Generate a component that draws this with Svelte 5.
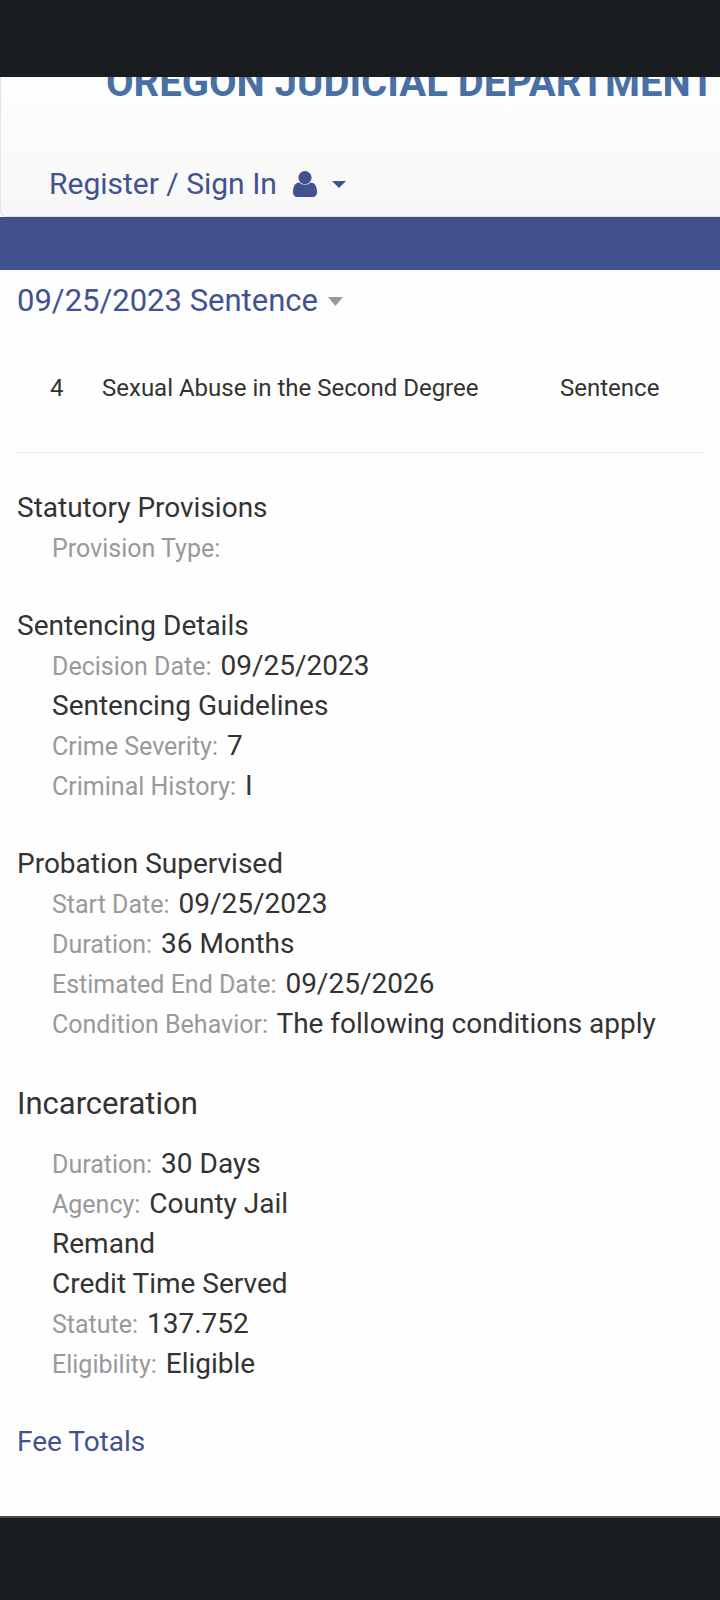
<script>
  const sections = [
    { title: 'Statutory Provisions', rows: [{ label: 'Provision Type:' }] },
    {
      title: 'Sentencing Details',
      rows: [
        { label: 'Decision Date:', value: '09/25/2023' },
        { value: 'Sentencing Guidelines' },
        { label: 'Crime Severity:', value: '7' },
        { label: 'Criminal History:', value: 'I' }
      ]
    },
    {
      title: 'Probation Supervised',
      rows: [
        { label: 'Start Date:', value: '09/25/2023' },
        { label: 'Duration:', value: '36 Months' },
        { label: 'Estimated End Date:', value: '09/25/2026' },
        { label: 'Condition Behavior:', value: 'The following conditions apply' }
      ]
    },
    {
      title: 'Incarceration',
      large: true,
      rows: [
        { label: 'Duration:', value: '30 Days' },
        { label: 'Agency:', value: 'County Jail' },
        { value: 'Remand' },
        { value: 'Credit Time Served' },
        { label: 'Statute:', value: '137.752' },
        { label: 'Eligibility:', value: 'Eligible' }
      ]
    }
  ];
</script>

<div class="page">
  <div class="top-bar"></div>
  <header>
    <a class="brand" href="#home">OREGON JUDICIAL DEPARTMENT</a>
    <nav>
      <button class="account" type="button">
        <span>Register / Sign In</span>
        <svg class="user" viewBox="0 0 24 26" aria-hidden="true">
          <circle cx="12" cy="6.6" r="6.6" />
          <path transform="translate(-4.8 -2.8) scale(.01875 .0173)" d="M1536 1399q0 109-62.500 187t-150.500 78h-854q-88 0-150.500-78t-62.500-187q0-85 8.500-160.500t31.500-152 58.500-131 94-89 134.500-34.500q131 128 313 128t313-128q76 0 134.500 34.500t94 89 58.500 131 31.500 152 8.500 160.500z" />
        </svg>
        <svg class="caret" viewBox="0 0 14 7" aria-hidden="true"><path d="M0 0H14L7 7Z" /></svg>
      </button>
    </nav>
  </header>
  <div class="band"></div>

  <main>
    <h1>
      <button class="event" type="button">
        <span>09/25/2023 Sentence</span>
        <svg viewBox="0 0 15 9" aria-hidden="true"><path d="M0 0H15L7.500 9Z" /></svg>
      </button>
    </h1>

    <table>
      <tbody>
        <tr>
          <td class="count">4</td>
          <td>Sexual Abuse in the Second Degree</td>
          <td class="stage">Sentence</td>
        </tr>
      </tbody>
    </table>

    {#each sections as section}
      <section>
        <h2 class:large={section.large}>{section.title}</h2>
        <ul>
          {#each section.rows as row}
            <li>
              {#if row.label}<span class="label">{row.label}</span>{/if}
              {row.value ?? ''}
            </li>
          {/each}
        </ul>
      </section>
    {/each}

    <a class="fees" href="#fees">Fee Totals</a>
  </main>
  <footer></footer>
</div>

<style>
  :global(body) {
    margin: 0;
    background: #fefefe;
  }

  .page {
    display: flex;
    flex-direction: column;
    min-height: 100vh;
    overflow: hidden;
    font-family: Roboto, sans-serif;
    font-size: 28px;
    line-height: 40px;
    color: #333;
  }

  .top-bar {
    height: 77px;
    background: #191d1f;
  }

  header {
    overflow: hidden;
    padding-bottom: 12px;
    border-left: 1px solid #e5e5e5;
    border-bottom: 1px solid #e0e0e0;
    border-bottom-left-radius: 6px;
    background: linear-gradient(#fefefe, #f7f7f7);
  }

  .brand {
    display: block;
    margin: -14px 0 61px 105px;
    font-size: 40px;
    font-weight: 700;
    color: #4870a5;
    white-space: nowrap;
    text-decoration: none;
  }

  button {
    display: flex;
    align-items: center;
    padding: 0;
    border: 0;
    background: none;
    font: inherit;
    color: #42528f;
    cursor: pointer;
  }

  .account {
    margin-left: 48px;
    font-size: 30px;
  }

  svg {
    fill: currentColor;
  }

  .user {
    width: 24px;
    height: 26px;
    margin-left: 16px;
  }

  .caret {
    width: 14px;
    height: 7px;
    margin-left: 15px;
  }

  .band {
    height: 53px;
    background: linear-gradient(#3e4d86, #42528f 8px);
  }

  main {
    flex: 1;
    padding: 9px 16px 52px 17px;
  }

  h1,
  h2 {
    margin: 0;
    font-size: 28px;
    font-weight: 400;
    line-height: 40px;
  }

  h1,
  .large {
    font-size: 31px;
    line-height: 44px;
  }

  .large {
    margin-bottom: 18px;
  }

  .event svg {
    width: 15px;
    height: 9px;
    margin-left: 10px;
    color: #999;
  }

  table {
    width: 100%;
    margin-bottom: 35px;
    border-collapse: collapse;
    table-layout: fixed;
    border-bottom: 1px solid #eee;
    font-size: 24px;
    line-height: 34px;
  }

  td {
    padding: 48px 0 47px;
  }

  .count {
    width: 85px;
    padding-left: 33px;
    box-sizing: border-box;
  }

  .stage {
    width: 144px;
  }

  section {
    margin-bottom: 38px;
  }

  ul {
    margin: 0;
    padding: 0 0 0 35px;
    list-style: none;
  }

  .label {
    margin-right: 2px;
    font-size: 25px;
    line-height: 1;
    color: #999;
  }

  .fees {
    display: block;
    width: fit-content;
    color: #42528f;
    text-decoration: none;
  }

  footer {
    height: 82px;
    border-top: 2px solid #41494d;
    background: #191d1f;
  }
</style>
